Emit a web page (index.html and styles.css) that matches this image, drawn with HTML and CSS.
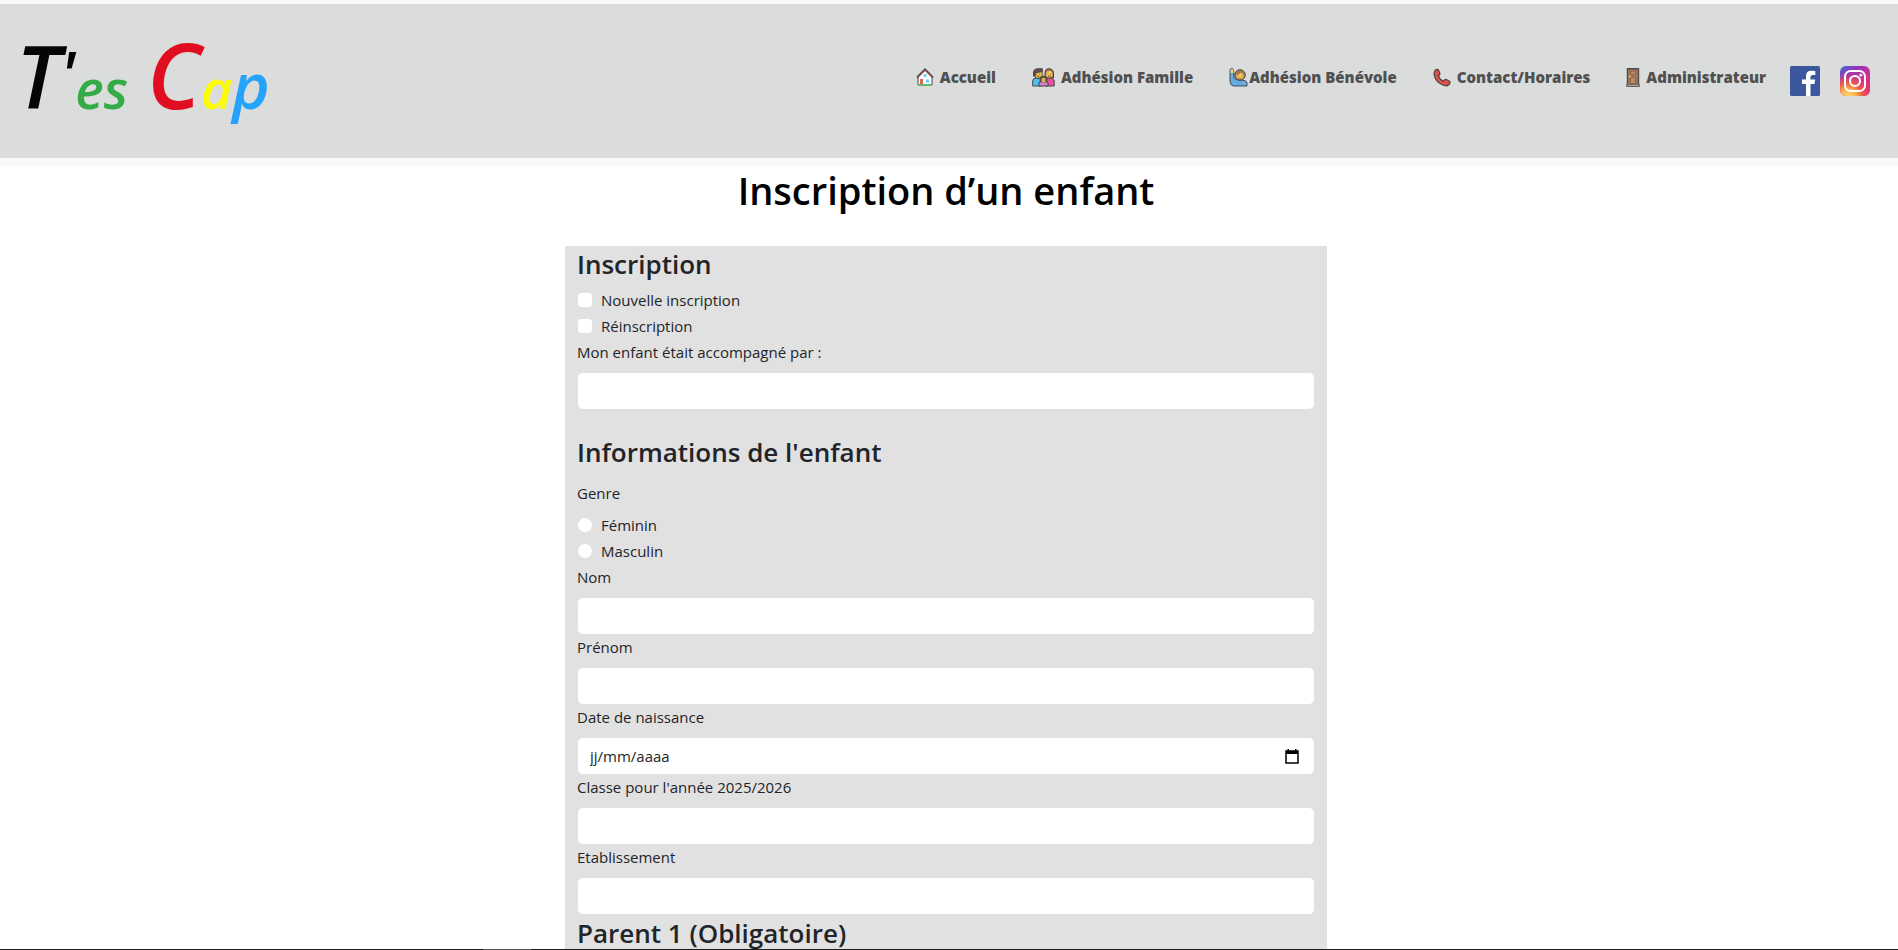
FILE: index.html
```html
<!DOCTYPE html>
<html lang="fr">
<head>
<meta charset="utf-8">
<title>Inscription d’un enfant</title>
<link rel="stylesheet" href="styles.css">
</head>
<body>
<header class="site-header">
  <a class="brand" href="#" aria-label="T'es Cap">
    <svg class="brand-logo" width="260" height="110" viewBox="0 0 260 110">
      <text class="logo-text" x="0" y="83"><tspan font-size="86" fill="#050505">T</tspan><tspan font-size="64" dy="-12" fill="#050505">'</tspan><tspan font-size="54" dy="12" fill="#34ab46">es</tspan></text>
      <text class="logo-text" x="131" y="83"><tspan font-size="90" fill="#e00e20">C</tspan><tspan font-size="54" fill="#fdfc04">a</tspan><tspan font-size="64" fill="#25a3fc">p</tspan></text>
    </svg>
  </a>
  <nav class="nav">
    <a class="nav-link" href="#">
      <svg width="18" height="18" viewBox="0 0 18 18"><path d="M2 8.500V17h14V8.500L9 2z" fill="#fff" stroke="#4a4a4a" stroke-width="1"/><path d="M1 9.500 9 1.500l8 8" fill="none" stroke="#4a4a4a" stroke-width="2"/><path d="M2 9.300 9 2.500l7 6.800" fill="none" stroke="#e05a50" stroke-width="1"/><path d="M4 11h3v6H4z" fill="#e8604c"/><path d="M7.500 6h3v3h-3zM10 11.500h3v3h-3z" fill="#62d3f5"/><path d="M2.500 16h13v1.500h-13z" fill="#53c567"/></svg>
      <span>Accueil</span>
    </a>
    <a class="nav-link" href="#">
      <svg width="23" height="19" viewBox="0 0 23 19"><g stroke="#464646" stroke-width="1"><path d="M.7 18v-5q0-3 4-3t5 3v5z" fill="#50c0ea"/><path d="M13 18v-5q0-3 4.500-3t4.700 3v5z" fill="#e8519c"/><path d="M13 10V5q0-4.300 4-4.300T21.500 5v5z" fill="#a96c4c"/><circle cx="6" cy="6" r="4.300" fill="#f6c851"/><path d="M1.500 8V3.500Q2 .7 6 .7h4.300v3L4 4.500 3 8z" fill="#655047"/><circle cx="17.300" cy="6.300" r="3.200" fill="#f6c851" stroke="none"/><path d="M7 18v-3q0-2 4.500-2t4.500 2v3z" fill="#d580cc"/><path d="M8 14v-3q0-3 3.500-3T15 11v3z" fill="#65443c" stroke-width=".7"/></g><circle cx="11.500" cy="12" r="2.200" fill="#f2bc55"/><path d="M4.500 6h.8M7 6h.8M4.500 8.200h3M15.500 6h.8M18.300 6h.8M16 8.200h3M10.500 12h.7M12.300 12h.7" stroke="#54402a" stroke-width=".8"/></svg>
      <span>Adhésion Famille</span>
    </a>
    <a class="nav-link nav-link-tight" href="#">
      <svg width="19" height="19" viewBox="0 0 19 19"><path d="M1 1.500Q3-.5 4.500 1.500L5 10q2 2 5 2 8 0 8 3v3H4.500Q1 17.500 1 13z" fill="#63ade0" stroke="#434b52"/><path d="M1.500 2Q3 0 4.500 2v3h-3z" fill="#f7cd59"/><circle cx="11" cy="7" r="5.300" fill="#a87a4c" stroke="#434b52"/><path d="M7.200 7q3 0 5-2.500 1 2 2.600 2.500-.2 4.300-3.800 4.300T7.200 7z" fill="#f7cd59"/><path d="M9 7.500v1M13 7.500v1M9.500 10q1.500 1 3 0" stroke="#5b4530" fill="none" stroke-width=".8"/></svg>
      <span>Adhésion Bénévole</span>
    </a>
    <a class="nav-link" href="#">
      <svg width="18" height="19" viewBox="0 0 18 19"><path d="M2 2.500Q4 .5 5.500 2L7 5.500Q7 7 5.300 8q1.500 3.700 5.200 5.200 1.300-2 2.800-1.700l3.200 1.700q1.300 1.500-.5 3.300-2 2-5 1Q2.500 14.500 1.200 7 .8 4 2 2.500z" fill="#df5146" stroke="#4a4545" stroke-width="1.200"/></svg>
      <span>Contact/Horaires</span>
    </a>
    <a class="nav-link" href="#">
      <svg width="14" height="19" viewBox="0 0 14 19"><path d="M1.500.7h11V18h-11z" fill="#a9785b" stroke="#4c4c4c" stroke-width="1.400"/><path d="M4.500 3h5v4h-5zM4.500 9.500h5v6h-5z" fill="#b98a6b" stroke="#84593f" stroke-width=".8"/><circle cx="4" cy="8.500" r=".9" fill="#f5cf55"/><path d="M.500 16.800h13v1.700H.500z" fill="#c7c7c7" stroke="#4c4c4c" stroke-width=".8"/></svg>
      <span>Administrateur</span>
    </a>
    <a class="social" href="#" aria-label="Facebook">
      <svg width="30" height="30" viewBox="0 0 30 30"><rect width="30" height="30" rx="1.500" fill="#3b579d"/><path d="M16 30V18h-4v-4.600h4V10q0-5.300 5.300-5.300 2.600 0 4 .2V9h-2.500Q20.500 9 20.500 11v2.400h4.700L24.500 18h-4v12z" fill="#fff"/></svg>
    </a>
    <a class="social" href="#" aria-label="Instagram">
      <svg width="30" height="30" viewBox="0 0 30 30"><defs><linearGradient id="ig-base" x1="0" y1="0" x2="1" y2="1"><stop offset="0" stop-color="#4267d8"/><stop offset=".3" stop-color="#9435bd"/><stop offset=".65" stop-color="#d42f8d"/><stop offset="1" stop-color="#e52c70"/></linearGradient><radialGradient id="ig-warm" cx=".27" cy="1.050" r=".9"><stop offset="0" stop-color="#ffdc75"/><stop offset=".3" stop-color="#fdb44f"/><stop offset=".55" stop-color="#f5603e" stop-opacity=".9"/><stop offset="1" stop-color="#d42f8d" stop-opacity="0"/></radialGradient></defs><rect width="30" height="30" rx="6" fill="url(#ig-base)"/><rect width="30" height="30" rx="6" fill="url(#ig-warm)"/><g fill="none" stroke="#fff" stroke-width="2"><rect x="5" y="5" width="20" height="20" rx="5.500"/><circle cx="15" cy="15" r="5"/></g><circle cx="20.800" cy="9.200" r="1.400" fill="#fff"/></svg>
    </a>
  </nav>
</header>
<main class="page">
  <h1 class="title">Inscription d’un enfant</h1>
  <form class="form">
    <section>
      <h2 class="heading">Inscription</h2>
      <div class="check"><input class="check-input" type="checkbox" id="nouvelle"><label for="nouvelle">Nouvelle inscription</label></div>
      <div class="check"><input class="check-input" type="checkbox" id="reinscription"><label for="reinscription">Réinscription</label></div>
      <label class="label" for="accompagne">Mon enfant était accompagné par :</label>
      <input class="control" type="text" id="accompagne">
    </section>
    <section class="child">
      <h2 class="heading">Informations de l'enfant</h2>
      <div class="genre" role="radiogroup" aria-labelledby="genre">
        <div class="label" id="genre">Genre</div>
        <div class="check"><input class="check-input radio" type="radio" name="genre" id="feminin"><label for="feminin">Féminin</label></div>
        <div class="check"><input class="check-input radio" type="radio" name="genre" id="masculin"><label for="masculin">Masculin</label></div>
      </div>
      <label class="label" for="nom">Nom</label>
      <input class="control" type="text" id="nom">
      <label class="label" for="prenom">Prénom</label>
      <input class="control" type="text" id="prenom">
      <label class="label" for="naissance">Date de naissance</label>
      <div class="date">
        <input class="control" type="text" id="naissance" placeholder="jj/mm/aaaa">
        <button class="date-button" type="button" aria-label="Ouvrir le calendrier">
          <svg width="14" height="15" viewBox="0 0 14 15"><path d="M1 2h12v12H1z" fill="none" stroke="#000" stroke-width="1.500"/><path d="M1 2h12v3H1zM2.500 0h1.500v2H2.500zM10 0h1.500v2H10z"/></svg>
        </button>
      </div>
      <label class="label" for="classe">Classe pour l'année 2025/2026</label>
      <input class="control" type="text" id="classe">
      <label class="label" for="etablissement">Etablissement</label>
      <input class="control" type="text" id="etablissement">
    </section>
    <section>
      <h2 class="heading">Parent 1 (Obligatoire)</h2>
    </section>
  </form>
</main>
<div class="bottom-edge"></div>
</body>
</html>
```
FILE: styles.css
```css
* { box-sizing: border-box; }
html { height: 100%; }
body {
  margin: 0;
  height: 100%;
  overflow: hidden;
  background: #fff;
  color: #212529;
  font-family: "Segoe UI", "Open Sans", "Noto Sans", sans-serif;
  font-size: 15px;
  line-height: 24px;
}
.site-header {
  display: flex;
  align-items: center;
  justify-content: space-between;
  border-top: 4px solid #f8f9fa;
  border-bottom: 8px solid #f8f9fa;
  padding: 22px 28px 22px 16px;
  background: #dadddc;
}
.brand, .brand-logo { display: block; }
.logo-text {
  font-family: "Open Sans", sans-serif;
  font-style: italic;
  font-weight: 600;
}
.nav { display: flex; align-items: flex-start; }
.nav-link {
  display: flex;
  align-items: center;
  gap: 6px;
  margin-right: 36px;
  color: #505050;
  font-weight: 800;
  line-height: 22px;
  text-decoration: none;
}
.nav-link-tight { gap: 1px; }
.nav-link:nth-child(5) { margin-right: 24px; }
.social { display: block; height: 30px; }
.social + .social { margin-left: 20px; }
.page { display: flex; flex-direction: column; align-items: center; padding: 0 6px 0 0; }
.title {
  margin: 0 0 32px;
  color: #000;
  font-size: 38px;
  line-height: 48px;
  font-weight: 600;
}
.form {
  width: 762px;
  max-width: 100%;
  padding: 0 12px 24px;
  background: #e1e1e1;
}
.heading {
  margin: 0 0 6px;
  font-size: 26px;
  line-height: 36px;
  font-weight: 600;
}
.check { display: flex; align-items: flex-start; gap: 8px; margin-bottom: 2px; }
.check-input {
  appearance: none;
  width: 16px;
  height: 16px;
  margin: 4px 0 0;
  border: 1px solid #dee2e6;
  border-radius: 4px;
  background: #fff;
}
.radio { border-radius: 50%; }
.label { display: block; margin-bottom: 8px; }
.control {
  display: block;
  width: 100%;
  height: 38px;
  padding: 6px 12px;
  border: 1px solid #dee2e6;
  border-radius: 6px;
  background: #fff;
  color: #212529;
  font: inherit;
}
.control::placeholder { color: #212529; opacity: 1; }
.child { padding-top: 24px; }
.genre { padding-top: 5px; }
.date { position: relative; }
.date-button {
  position: absolute;
  right: 16px;
  top: 12px;
  padding: 0;
  border: 0;
  background: none;
}
.date-button svg { display: block; }
.bottom-edge {
  position: fixed;
  inset: auto 0 0 0;
  height: 1px;
  background: linear-gradient(90deg, #1c1c1f 483px, #55565a 483px 531px, #1c1c1f 531px);
}
```
